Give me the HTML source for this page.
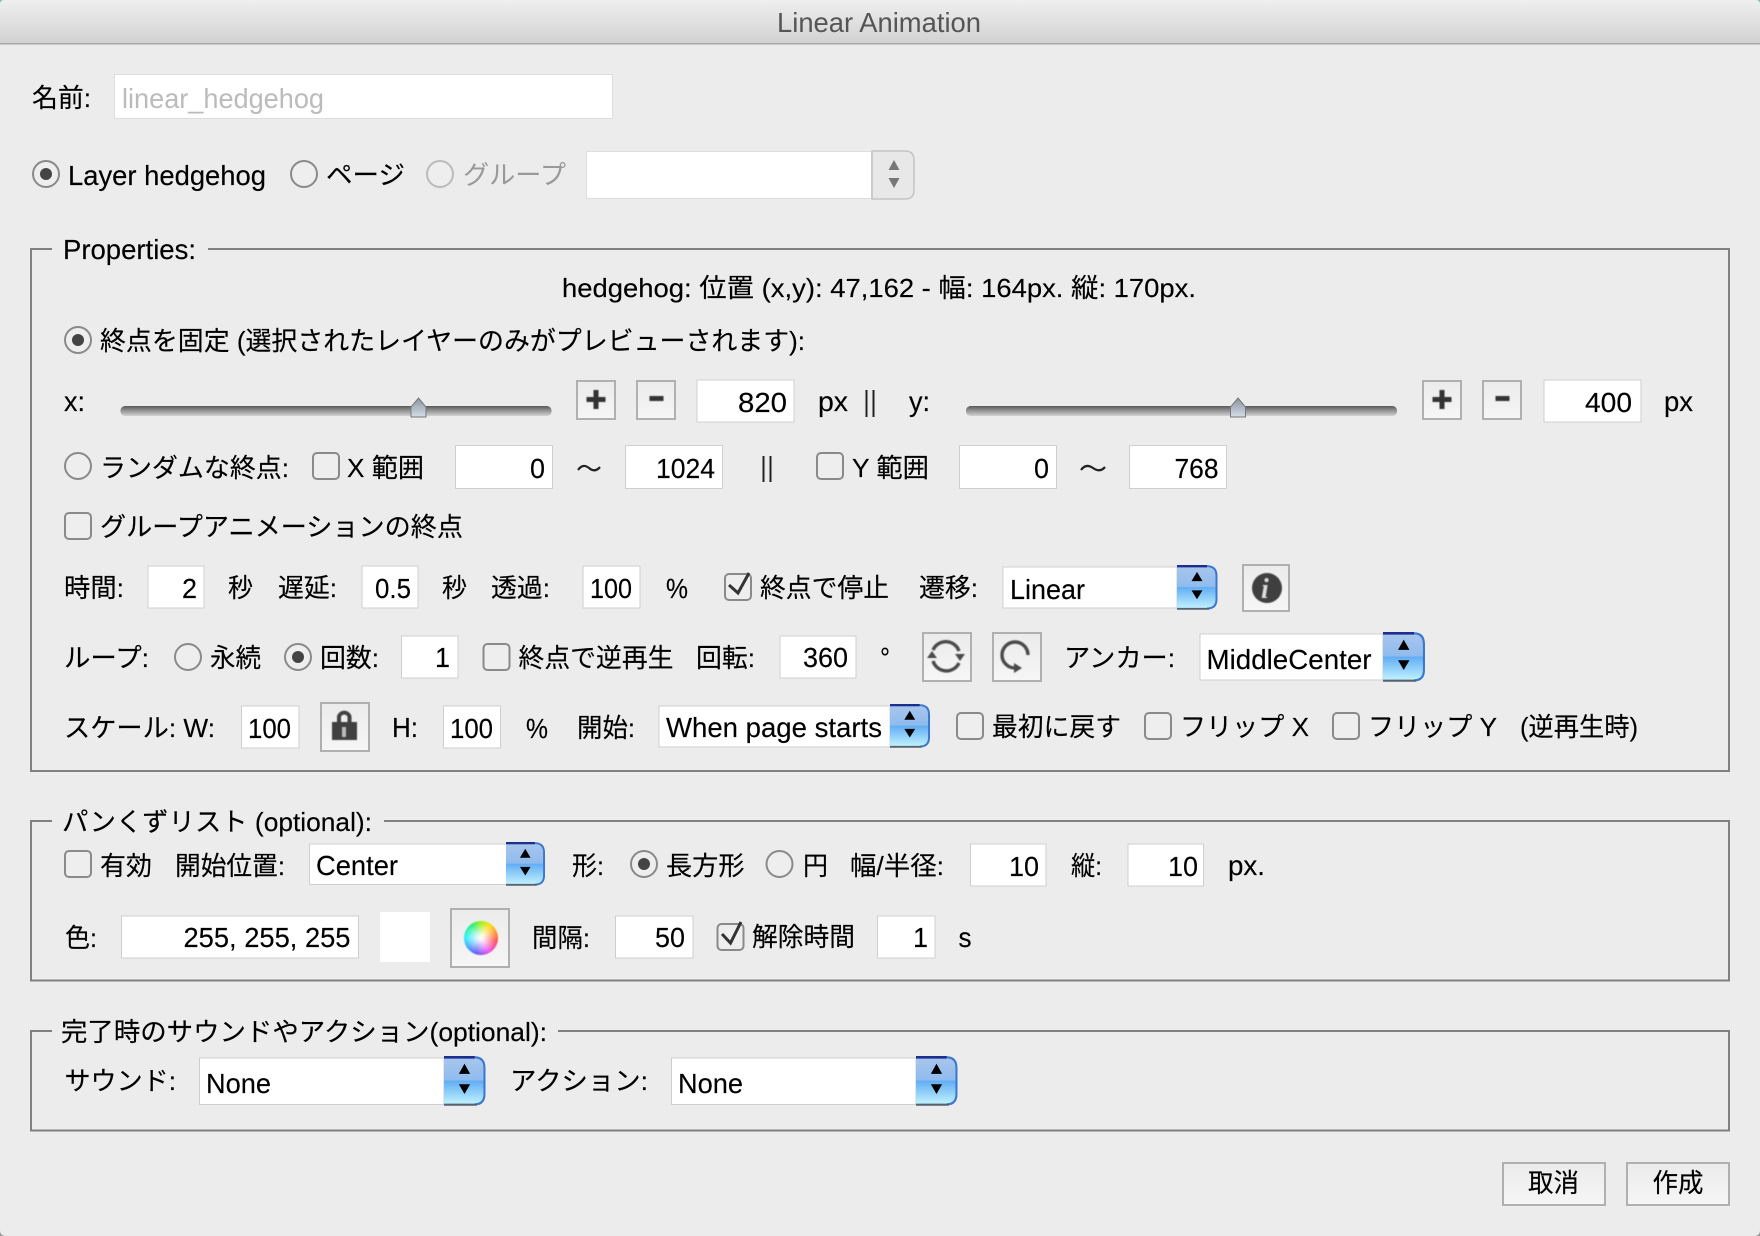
<!DOCTYPE html>
<html lang="ja"><head><meta charset="utf-8"><title>Linear Animation</title>
<style>
html,body{margin:0;padding:0;background:#ececec;width:1760px;height:1236px;overflow:hidden}
svg{position:absolute;left:0;top:0}
text{font-family:"Liberation Sans","Noto Sans CJK JP",sans-serif;font-size:26px;fill:#000;stroke:#000;stroke-width:.15px}
text.l{font-size:28px}
.i{fill:#fff;stroke:#cfcfcf;stroke-width:1}
.b{fill:url(#btn);stroke:#b0b0b0;stroke-width:2}
.r{fill:#eee;stroke:#8a8a8a;stroke-width:2}
.c{fill:#eee;stroke:#8a8a8a;stroke-width:2}
.d{fill:#444}
.f{fill:none;stroke:#808080;stroke-width:2}
.k{fill:none;stroke:#333;stroke-width:3}
.o{fill:none;stroke:#4a4a4a;stroke-width:3.4}
.soft{filter:blur(.6px)}
#wheel{position:absolute;left:464px;top:921px;width:34px;height:34px;border-radius:50%;filter:blur(.5px);background:radial-gradient(circle,#fff 0,rgba(255,255,255,.85) 15%,rgba(255,255,255,0) 70%),conic-gradient(#9e0 0deg,#fd0 35deg,#f44 100deg,#e4e 150deg,#55f 200deg,#2ef 270deg,#2e6 330deg,#9e0 360deg)}
</style></head><body>
<svg width="1760" height="1236" viewBox="0 0 1760 1236" xmlns="http://www.w3.org/2000/svg">
<defs>
<linearGradient id="tb" x1="0" y1="0" x2="0" y2="1"><stop offset="0" stop-color="#efefef"/><stop offset="1" stop-color="#d1d1d1"/></linearGradient>
<linearGradient id="btn" x1="0" y1="0" x2="0" y2="1"><stop offset="0" stop-color="#ebebeb"/><stop offset="1" stop-color="#f6f6f6"/></linearGradient>
<linearGradient id="trk" x1="0" y1="0" x2="0" y2="1"><stop offset="0" stop-color="#585858"/><stop offset=".4" stop-color="#8c8c8c"/><stop offset="1" stop-color="#d2d2d2"/></linearGradient>
<linearGradient id="thm" x1="0" y1="0" x2="0" y2="1"><stop offset="0" stop-color="#8a949e"/><stop offset=".6" stop-color="#b4c0cc"/><stop offset="1" stop-color="#d6dee6"/></linearGradient>
<linearGradient id="blu" x1="0" y1="0" x2="0" y2="1"><stop offset="0" stop-color="#a8c6ec"/><stop offset=".48" stop-color="#90bbee"/><stop offset=".5" stop-color="#62aef4"/><stop offset="1" stop-color="#c4f4ff"/></linearGradient>
<symbol id="st" viewBox="0 0 41 46" preserveAspectRatio="none">
<path d="M0 1H30Q40 1 40 11V35Q40 45 30 45H0Z" fill="url(#blu)"/>
<path d="M0 1.2H30Q39.5 1.2 39.500 11V35Q39.500 44.500 30 44.500" fill="none" stroke="#3a78d0" stroke-width="2"/>
<path d="M0 1.2H30" stroke="#1d2f8e" stroke-width="2.4" fill="none"/>
<path d="M0 44.800H32" stroke="#56626e" stroke-width="2" fill="none"/>
<path d="M14.500 16.500H25.500L20 7ZM14.500 26H25.500L20 35Z" fill="#000"/>
</symbol>
</defs>
<rect width="1760" height="1236" fill="#ececec"/>
<path d="M0 0H4Q0 0 0 4ZM1760 0H1756Q1760 0 1760 4Z" fill="#7fb6b0"/>
<path d="M0 1236V1230Q0 1236 6 1236ZM1760 1236V1230Q1760 1236 1754 1236Z" fill="#999"/>
<path d="M0 44V6Q0 0 6 0H1754Q1760 0 1760 6V44Z" fill="url(#tb)"/>
<rect y="43" width="1760" height="1.500" fill="#a8a8a8"/>
<text class="l" x="777" y="32" textLength="204" lengthAdjust="spacingAndGlyphs" style="fill:#555;stroke:none">Linear Animation</text>

<text x="32" y="107" textLength="59" lengthAdjust="spacingAndGlyphs">名前:</text>
<rect class="i" x="114.500" y="74.500" width="498" height="44" style="stroke:#ddd"/>
<text class="l" x="122" y="108" textLength="202" lengthAdjust="spacingAndGlyphs" style="fill:#bbb;stroke:none">linear_hedgehog</text>

<circle class="r" cx="46" cy="174" r="13"/><circle class="d" cx="46" cy="174" r="6"/>
<text class="l" x="68" y="185" textLength="198" lengthAdjust="spacingAndGlyphs">Layer hedgehog</text>
<circle class="r" cx="304" cy="174" r="13"/>
<text x="326" y="184" textLength="79" lengthAdjust="spacingAndGlyphs">ページ</text>
<circle class="r" cx="440" cy="174" r="13" style="stroke:#bbb"/>
<text x="463" y="184" textLength="103" lengthAdjust="spacingAndGlyphs" style="fill:#999;stroke:none">グループ</text>
<rect class="i" x="586.500" y="151.500" width="285" height="47" style="stroke:#ddd"/>
<path d="M872 151H905Q914 151 914 160V190Q914 199 905 199H872Z" fill="#e8e8e8" stroke="#c4c4c4" stroke-width="1.500"/>
<path d="M888.500 170H899.500L894 160ZM888.500 178H899.500L894 188Z" fill="#777"/>

<path class="f" d="M52 249H31V771H1729V249H208"/>
<text class="l" x="63" y="259" textLength="133" lengthAdjust="spacingAndGlyphs">Properties:</text>
<text x="562" y="297" textLength="634" lengthAdjust="spacingAndGlyphs">hedgehog: 位置 (x,y): 47,162 - 幅: 164px. 縦: 170px.</text>

<circle class="r" cx="78" cy="340" r="13"/><circle class="d" cx="78" cy="340" r="6"/>
<text x="100" y="350" textLength="705" lengthAdjust="spacingAndGlyphs">終点を固定 (選択されたレイヤーのみがプレビューされます):</text>

<text class="l" x="64" y="411" textLength="21" lengthAdjust="spacingAndGlyphs">x:</text>
<rect x="120.500" y="406" width="431" height="10" rx="4.500" fill="url(#trk)"/>
<path d="M418.500 398L426 407V417H411V407Z" fill="url(#thm)" stroke="#777" stroke-width="1"/>
<rect class="b" x="577" y="381" width="38" height="38"/>
<path class="soft" d="M593.500 390H598.500V397H605.500V402H598.500V409H593.500V402H586.500V397H593.500Z" fill="#333"/>
<rect class="b" x="637" y="381" width="38" height="38"/>
<rect class="soft" x="649.500" y="396" width="14" height="5" fill="#333"/>
<rect class="i" x="697" y="380" width="97" height="42"/>
<text class="l" x="738" y="412" textLength="49" lengthAdjust="spacingAndGlyphs">820</text>
<text class="l" x="818" y="411" textLength="30" lengthAdjust="spacingAndGlyphs">px</text>
<path d="M866.500 390V417M873.500 390V417" stroke="#222" stroke-width="2"/>

<text class="l" x="909" y="411" textLength="21" lengthAdjust="spacingAndGlyphs">y:</text>
<rect x="966" y="406" width="431" height="10" rx="4.500" fill="url(#trk)"/>
<path d="M1238 398L1245.500 407V417H1230.500V407Z" fill="url(#thm)" stroke="#777" stroke-width="1"/>
<rect class="b" x="1423" y="381" width="38" height="38"/>
<path class="soft" d="M1439.500 390H1444.500V397H1451.500V402H1444.500V409H1439.500V402H1432.500V397H1439.500Z" fill="#333"/>
<rect class="b" x="1483" y="381" width="38" height="38"/>
<rect class="soft" x="1495.500" y="396" width="14" height="5" fill="#333"/>
<rect class="i" x="1544" y="380" width="97" height="42"/>
<text class="l" x="1585" y="412" textLength="47" lengthAdjust="spacingAndGlyphs">400</text>
<text class="l" x="1664" y="411" textLength="29" lengthAdjust="spacingAndGlyphs">px</text>

<circle class="r" cx="78" cy="466" r="13"/>
<text x="100" y="477" textLength="189" lengthAdjust="spacingAndGlyphs">ランダムな終点:</text>
<rect class="c" x="313" y="453" width="26" height="26" rx="4"/>
<text x="347" y="477" textLength="77" lengthAdjust="spacingAndGlyphs">X 範囲</text>
<rect class="i" x="455.500" y="445.500" width="97" height="43"/>
<text class="l" x="530" y="478" textLength="15" lengthAdjust="spacingAndGlyphs">0</text>
<path d="M578 470Q583 463 589 468T600 467" fill="none" stroke="#222" stroke-width="2.200"/>
<rect class="i" x="625.500" y="445.500" width="97" height="43"/>
<text class="l" x="656" y="478" textLength="59" lengthAdjust="spacingAndGlyphs">1024</text>
<path d="M763.500 456V482M770.500 456V482" stroke="#222" stroke-width="2"/>
<rect class="c" x="817" y="453" width="26" height="26" rx="4"/>
<text x="852" y="477" textLength="77" lengthAdjust="spacingAndGlyphs">Y 範囲</text>
<rect class="i" x="959.500" y="445.500" width="97" height="43"/>
<text class="l" x="1034" y="478" textLength="15" lengthAdjust="spacingAndGlyphs">0</text>
<path d="M1081 470Q1086 463 1093 468T1105 467" fill="none" stroke="#222" stroke-width="2.200"/>
<rect class="i" x="1129.500" y="445.500" width="97" height="43"/>
<text class="l" x="1174.500" y="478" textLength="44" lengthAdjust="spacingAndGlyphs">768</text>

<rect class="c" x="65" y="513" width="26" height="26" rx="4"/>
<text x="100" y="536" textLength="363" lengthAdjust="spacingAndGlyphs">グループアニメーションの終点</text>

<text x="64" y="597" textLength="60" lengthAdjust="spacingAndGlyphs">時間:</text>
<rect class="i" x="148" y="566" width="56" height="42"/>
<text class="l" x="182" y="598" textLength="15" lengthAdjust="spacingAndGlyphs">2</text>
<text x="228" y="597" textLength="25" lengthAdjust="spacingAndGlyphs">秒</text>
<text x="278" y="597" textLength="59" lengthAdjust="spacingAndGlyphs">遅延:</text>
<rect class="i" x="362" y="566" width="56" height="42"/>
<text class="l" x="375" y="598" textLength="36" lengthAdjust="spacingAndGlyphs">0.5</text>
<text x="442" y="597" textLength="25" lengthAdjust="spacingAndGlyphs">秒</text>
<text x="491" y="597" textLength="59" lengthAdjust="spacingAndGlyphs">透過:</text>
<rect class="i" x="583" y="566" width="57" height="42"/>
<text class="l" x="590" y="598" textLength="42" lengthAdjust="spacingAndGlyphs">100</text>
<text class="l" x="666" y="598" textLength="22" lengthAdjust="spacingAndGlyphs">%</text>
<rect class="c" x="725" y="574" width="26" height="26" rx="4"/>
<path class="k" d="M729 585L738 593L749 573"/>
<text x="760" y="597" textLength="129" lengthAdjust="spacingAndGlyphs">終点で停止</text>
<text x="919" y="597" textLength="59" lengthAdjust="spacingAndGlyphs">遷移:</text>
<rect class="i" x="1003" y="567" width="174" height="41"/>
<text class="l" x="1010" y="599" textLength="75" lengthAdjust="spacingAndGlyphs">Linear</text>
<use href="#st" x="1177" y="565" width="41" height="45"/>
<rect class="b" x="1243" y="565" width="46" height="46"/>
<g class="soft">
<circle cx="1267" cy="588" r="15" fill="#3f3f3f"/>
<text x="1261" y="598" style="font-family:'Liberation Serif',serif;font-weight:bold;font-style:italic;font-size:28px;fill:#ddd;stroke:none">i</text>
</g>

<text x="64" y="667" textLength="85" lengthAdjust="spacingAndGlyphs">ループ:</text>
<circle class="r" cx="188" cy="657" r="13"/>
<text x="210" y="667" textLength="51" lengthAdjust="spacingAndGlyphs">永続</text>
<circle class="r" cx="298" cy="657" r="13"/><circle class="d" cx="298" cy="657" r="6"/>
<text x="320" y="667" textLength="59" lengthAdjust="spacingAndGlyphs">回数:</text>
<rect class="i" x="401.500" y="636" width="56.500" height="42"/>
<text class="l" x="435" y="667" textLength="15" lengthAdjust="spacingAndGlyphs">1</text>
<rect class="c" x="483.500" y="644" width="26" height="26" rx="4"/>
<text x="518.500" y="667" textLength="155" lengthAdjust="spacingAndGlyphs">終点で逆再生</text>
<text x="696" y="667" textLength="59" lengthAdjust="spacingAndGlyphs">回転:</text>
<rect class="i" x="780" y="636" width="76" height="42"/>
<text class="l" x="803" y="667" textLength="45" lengthAdjust="spacingAndGlyphs">360</text>
<text class="l" x="880" y="667" textLength="10" lengthAdjust="spacingAndGlyphs">°</text>
<rect class="b" x="923" y="633" width="48" height="48"/>
<g class="soft">
<path class="o" d="M933 650A14 14 0 0 1 959 651M959 663A14 14 0 0 1 933 661"/>
<path d="M955 654H965L960 661ZM927 658H937L932 651Z" fill="#4a4a4a"/>
</g>
<rect class="b" x="993" y="633" width="48" height="48"/>
<g class="soft">
<path class="o" d="M1028 655A13 13 0 1 0 1015 668"/>
<path d="M1014 663V673L1022 668Z" fill="#4a4a4a"/>
</g>
<text x="1064" y="667" textLength="111" lengthAdjust="spacingAndGlyphs">アンカー:</text>
<rect class="i" x="1200" y="634" width="183" height="46"/>
<text class="l" x="1206.500" y="669" textLength="165" lengthAdjust="spacingAndGlyphs">MiddleCenter</text>
<use href="#st" x="1383" y="632" width="42.500" height="50"/>

<text x="64" y="737" textLength="151" lengthAdjust="spacingAndGlyphs">スケール: W:</text>
<rect class="i" x="241.500" y="706" width="57.500" height="42"/>
<text class="l" x="248" y="738" textLength="43" lengthAdjust="spacingAndGlyphs">100</text>
<rect class="b" x="321" y="703" width="48" height="48"/>
<g class="soft">
<path d="M339 722V716.500A5.500 5.500 0 0 1 349.500 716.500V722" fill="none" stroke="#404040" stroke-width="4"/>
<rect x="332" y="722" width="25" height="18" fill="#404040"/>
<rect x="342" y="727" width="4" height="10" fill="#bbb"/>
</g>
<text class="l" x="392" y="737" textLength="26" lengthAdjust="spacingAndGlyphs">H:</text>
<rect class="i" x="443.500" y="706" width="57" height="42"/>
<text class="l" x="450" y="738" textLength="43" lengthAdjust="spacingAndGlyphs">100</text>
<text class="l" x="526" y="738" textLength="22" lengthAdjust="spacingAndGlyphs">%</text>
<text x="577" y="737" textLength="58" lengthAdjust="spacingAndGlyphs">開始:</text>
<rect class="i" x="659" y="706" width="231" height="41"/>
<text class="l" x="666" y="737" textLength="216" lengthAdjust="spacingAndGlyphs">When page starts</text>
<use href="#st" x="890" y="704" width="40.500" height="44"/>
<rect class="c" x="957" y="713" width="26" height="26" rx="4"/>
<text x="992" y="736" textLength="129" lengthAdjust="spacingAndGlyphs">最初に戻す</text>
<rect class="c" x="1145" y="713" width="26" height="26" rx="4"/>
<text x="1180" y="736" textLength="129" lengthAdjust="spacingAndGlyphs">フリップ X</text>
<rect class="c" x="1333" y="713" width="26" height="26" rx="4"/>
<text x="1368" y="736" textLength="129" lengthAdjust="spacingAndGlyphs">フリップ Y</text>
<text x="1520" y="736" textLength="118" lengthAdjust="spacingAndGlyphs">(逆再生時)</text>

<path class="f" d="M52 821H31V980.500H1729V821H384"/>
<text x="62" y="831" textLength="310" lengthAdjust="spacingAndGlyphs">パンくずリスト (optional):</text>
<rect class="c" x="65" y="851" width="26" height="26" rx="4"/>
<text x="100" y="875" textLength="52" lengthAdjust="spacingAndGlyphs">有効</text>
<text x="175" y="875" textLength="110" lengthAdjust="spacingAndGlyphs">開始位置:</text>
<rect class="i" x="309.500" y="844" width="197" height="40.500"/>
<text class="l" x="316" y="875" textLength="82" lengthAdjust="spacingAndGlyphs">Center</text>
<use href="#st" x="506" y="842" width="39.500" height="44"/>
<text x="572" y="875" textLength="32" lengthAdjust="spacingAndGlyphs">形:</text>
<circle class="r" cx="644" cy="864" r="13"/><circle class="d" cx="644" cy="864" r="6"/>
<text x="666" y="875" textLength="78.500" lengthAdjust="spacingAndGlyphs">長方形</text>
<circle class="r" cx="779.500" cy="864" r="13"/>
<text x="803" y="875" textLength="25" lengthAdjust="spacingAndGlyphs">円</text>
<text x="850" y="875" textLength="94" lengthAdjust="spacingAndGlyphs">幅/半径:</text>
<rect class="i" x="970.500" y="844" width="75.500" height="42"/>
<text class="l" x="1009" y="876" textLength="30" lengthAdjust="spacingAndGlyphs">10</text>
<text x="1071" y="875" textLength="31" lengthAdjust="spacingAndGlyphs">縦:</text>
<rect class="i" x="1128" y="844" width="75.500" height="42"/>
<text class="l" x="1168" y="876" textLength="30" lengthAdjust="spacingAndGlyphs">10</text>
<text class="l" x="1228" y="875" textLength="37" lengthAdjust="spacingAndGlyphs">px.</text>

<text x="65" y="947" textLength="32" lengthAdjust="spacingAndGlyphs">色:</text>
<rect class="i" x="121.500" y="916" width="237" height="42"/>
<text class="l" x="183.500" y="947" textLength="167" lengthAdjust="spacingAndGlyphs">255, 255, 255</text>
<rect x="380" y="912" width="50" height="50" fill="#fff"/>
<rect class="b" x="451" y="909" width="58" height="58"/>
<text x="532" y="947" textLength="58" lengthAdjust="spacingAndGlyphs">間隔:</text>
<rect class="i" x="615.500" y="916" width="77.500" height="42"/>
<text class="l" x="655" y="947" textLength="30" lengthAdjust="spacingAndGlyphs">50</text>
<rect class="c" x="717.500" y="924" width="26" height="26" rx="4"/>
<path class="k" d="M722 934L730.500 943L741 922"/>
<text x="752" y="946" textLength="103" lengthAdjust="spacingAndGlyphs">解除時間</text>
<rect class="i" x="877.500" y="916" width="57.500" height="42"/>
<text class="l" x="913" y="947" textLength="15" lengthAdjust="spacingAndGlyphs">1</text>
<text class="l" x="958.500" y="947" textLength="13" lengthAdjust="spacingAndGlyphs">s</text>

<path class="f" d="M52 1031H31V1130.500H1729V1031H558"/>
<text x="61" y="1041" textLength="486" lengthAdjust="spacingAndGlyphs">完了時のサウンドやアクション(optional):</text>
<text x="64.500" y="1090" textLength="111.500" lengthAdjust="spacingAndGlyphs">サウンド:</text>
<rect class="i" x="199.500" y="1058" width="244.500" height="46.500"/>
<text class="l" x="206" y="1093" textLength="65" lengthAdjust="spacingAndGlyphs">None</text>
<use href="#st" x="444" y="1056" width="42" height="50"/>
<text x="510" y="1090" textLength="138" lengthAdjust="spacingAndGlyphs">アクション:</text>
<rect class="i" x="671.500" y="1058" width="244.500" height="46.500"/>
<text class="l" x="678" y="1093" textLength="65" lengthAdjust="spacingAndGlyphs">None</text>
<use href="#st" x="916" y="1056" width="42" height="50"/>

<rect class="b" x="1503" y="1163" width="102" height="42"/>
<text x="1528" y="1192" textLength="51" lengthAdjust="spacingAndGlyphs">取消</text>
<rect class="b" x="1627" y="1163" width="102" height="42"/>
<text x="1652.500" y="1192" textLength="51" lengthAdjust="spacingAndGlyphs">作成</text>
</svg>
<div id="wheel"></div>
</body></html>
